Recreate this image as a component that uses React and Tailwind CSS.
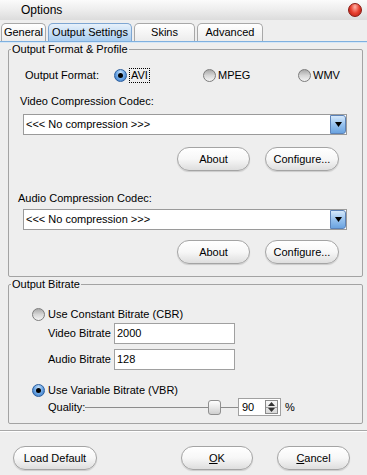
import React from "react";

function Radio({ checked }) {
  if (checked) {
    return (
      <span className="w-[13px] h-[13px] shrink-0 rounded-full border border-[#2d5f9e] bg-radial-[at_50%_30%] from-[#cfe6fb] via-[#6ea8e6] to-[#2b69b8] flex items-center justify-center">
        <span className="w-[5px] h-[5px] rounded-full bg-black" />
      </span>
    );
  }
  return (
    <span className="w-[13px] h-[13px] shrink-0 rounded-full border border-[#7c7c7c] bg-linear-to-b from-[#a9a9a9] via-[#d6d6d6] to-[#f4f4f4]" />
  );
}

function PillButton({ children, w }) {
  return (
    <button
      className={`${w} h-[24px] rounded-full border border-[#a4a4a4] bg-linear-to-b from-white via-[#f7f7f7] to-[#dedede] shadow-[0_1px_1px_rgba(0,0,0,0.15)] text-[11px] text-black flex items-center justify-center`}
    >
      {children}
    </button>
  );
}

function Dropdown() {
  return (
    <div className="ml-[14px] w-[324px] h-[21px] flex bg-white border border-[#9a9a9a]">
      <span className="flex-1 pl-[2px] leading-[19px]">{"<<< No compression >>>"}</span>
      <span className="w-[16px] h-[19px] rounded-r-[3px] border border-[#5b82b8] bg-linear-to-b from-[#d6e9fb] via-[#97c2ee] to-[#6aa3e0] flex items-center justify-center">
        <svg width="7" height="5" viewBox="0 0 7 5">
          <path d="M0 0h7L3.5 5z" fill="#000" />
        </svg>
      </span>
    </div>
  );
}

function Tab({ label, active, w }) {
  return (
    <div
      className={`${w} h-[18px] rounded-t-[5px] border border-b-0 flex items-center justify-center ${
        active
          ? "border-[#7ea6d2] bg-linear-to-b from-[#e7f1fb] to-[#a9cdef]"
          : "border-[#a8a8a8] bg-linear-to-b from-white to-[#ececec]"
      }`}
    >
      {label}
    </div>
  );
}

export default function App() {
  return (
    <div className="w-[367px] h-[475px] bg-[#eeeeee] flex flex-col text-[11px] text-black font-['Liberation_Sans',Arial,sans-serif] overflow-hidden">
      {/* Title bar */}
      <div className="h-[20px] flex items-center justify-between pl-[21px] pr-[5px] bg-linear-to-b from-[#fbfbfb] via-[#ededed] to-[#dcdcdc]">
        <span className="text-[12px] leading-[14px] -mt-[1px]">Options</span>
        <span className="w-[14px] h-[14px] rounded-full border border-[#8a1a12] bg-radial-[at_50%_25%] from-[#ffb3a8] via-[#e8402f] to-[#a8170c]" />
      </div>

      {/* Tabs */}
      <div className="h-[21px] flex items-end gap-[2px] pl-[1px]">
        <Tab label="General" w="w-[45px]" />
        <Tab label="Output Settings" w="w-[84px]" active />
        <Tab label="Skins" w="w-[61px]" />
        <Tab label="Advanced" w="w-[66px]" />
      </div>
      <div className="h-[1px] bg-[#7fb0df]" />
      <div className="h-[1px] bg-[#d4e6f6]" />

      {/* Output Format & Profile */}
      <fieldset className="ml-[8px] w-[355px] border border-[#a3a3a3] rounded-[2px] pb-[12px]">
        <legend className="ml-[2px] px-[1px] leading-[13px]">Output Format &amp; Profile</legend>

        <div className="mt-[11px] h-[16px] flex items-center pl-[16px]">
          <span className="w-[89px]">Output Format:</span>
          <div className="w-[89px] flex items-center gap-[3px]">
            <Radio checked />
            <span className="outline outline-1 outline-dotted outline-black px-[1px] leading-[13px]">AVI</span>
          </div>
          <div className="w-[95px] flex items-center gap-[2px]">
            <Radio />
            <span>MPEG</span>
          </div>
          <div className="flex items-center gap-[2px]">
            <Radio />
            <span>WMV</span>
          </div>
        </div>

        <div className="mt-[11px] h-[14px] pl-[11px] leading-[14px]">Video Compression Codec:</div>
        <div className="mt-[6px]">
          <Dropdown />
        </div>
        <div className="mt-[12px] flex justify-end gap-[15px] pr-[23px]">
          <PillButton w="w-[73px]">About</PillButton>
          <PillButton w="w-[74px]">Configure...</PillButton>
        </div>

        <div className="mt-[20px] h-[14px] pl-[9px] leading-[14px]">Audio Compression Codec:</div>
        <div className="mt-[4px]">
          <Dropdown />
        </div>
        <div className="mt-[10px] flex justify-end gap-[15px] pr-[23px]">
          <PillButton w="w-[73px]">About</PillButton>
          <PillButton w="w-[74px]">Configure...</PillButton>
        </div>
      </fieldset>

      {/* Output Bitrate */}
      <fieldset className="mt-[1px] ml-[8px] w-[355px] border border-[#a3a3a3] rounded-[2px] pb-[7px]">
        <legend className="ml-[2px] px-[1px] leading-[13px]">Output Bitrate</legend>

        <div className="mt-[15px] h-[16px] flex items-center gap-[3px] pl-[23px]">
          <Radio />
          <span>Use Constant Bitrate (CBR)</span>
        </div>
        <div className="mt-[1px] h-[21px] flex items-center pl-[39px]">
          <span className="w-[66px]">Video Bitrate</span>
          <div className="w-[121px] h-[21px] bg-white border border-[#a0a0a0] pl-[2px] leading-[19px]">2000</div>
        </div>
        <div className="mt-[5px] h-[21px] flex items-center pl-[39px]">
          <span className="w-[66px]">Audio Bitrate</span>
          <div className="w-[121px] h-[21px] bg-white border border-[#a0a0a0] pl-[2px] leading-[19px]">128</div>
        </div>
        <div className="mt-[12px] h-[16px] flex items-center gap-[3px] pl-[23px]">
          <Radio checked />
          <span>Use Variable Bitrate (VBR)</span>
        </div>
        <div className="h-[18px] flex items-center pl-[39px]">
          <span className="w-[37px]">Quality:</span>
          <div className="w-[153px] h-[18px] flex items-center">
            <div className="w-[123px] h-[1px] bg-[#8c8c8c]" />
            <div className="w-[13px] h-[15px] rounded-[3px] border border-[#8f8f8f] bg-linear-to-b from-white via-[#e8e8e8] to-[#cfcfcf]" />
            <div className="w-[17px] h-[1px] bg-[#8c8c8c]" />
          </div>
          <div className="w-[43px] h-[18px] bg-white border border-[#a0a0a0] flex items-center justify-between pl-[3px] pr-[2px]">
            <span className="leading-[16px]">90</span>
            <div className="w-[13px] h-[14px] flex flex-col border border-[#8a8a8a] bg-linear-to-b from-[#f8f8f8] to-[#d8d8d8]">
              <div className="flex-1 flex items-center justify-center border-b border-[#9a9a9a]">
                <svg width="7" height="4" viewBox="0 0 7 4">
                  <path d="M3.5 0L7 4H0z" fill="#333" />
                </svg>
              </div>
              <div className="flex-1 flex items-center justify-center">
                <svg width="7" height="4" viewBox="0 0 7 4">
                  <path d="M0 0h7L3.5 4z" fill="#333" />
                </svg>
              </div>
            </div>
          </div>
          <span className="ml-[4px]">%</span>
        </div>
      </fieldset>

      {/* Separator */}
      <div className="mt-[6px] h-[1px] bg-[#a8a8a8]" />
      <div className="h-[1px] bg-white" />

      {/* Bottom buttons */}
      <div className="mt-[14px] flex items-center pl-[13px]">
        <PillButton w="w-[84px]">Load Default</PillButton>
        <div className="ml-[84px]">
          <PillButton w="w-[72px]">
            <span className="underline">O</span>K
          </PillButton>
        </div>
        <div className="ml-[24px]">
          <PillButton w="w-[73px]">
            <span className="underline">C</span>ancel
          </PillButton>
        </div>
      </div>
    </div>
  );
}
